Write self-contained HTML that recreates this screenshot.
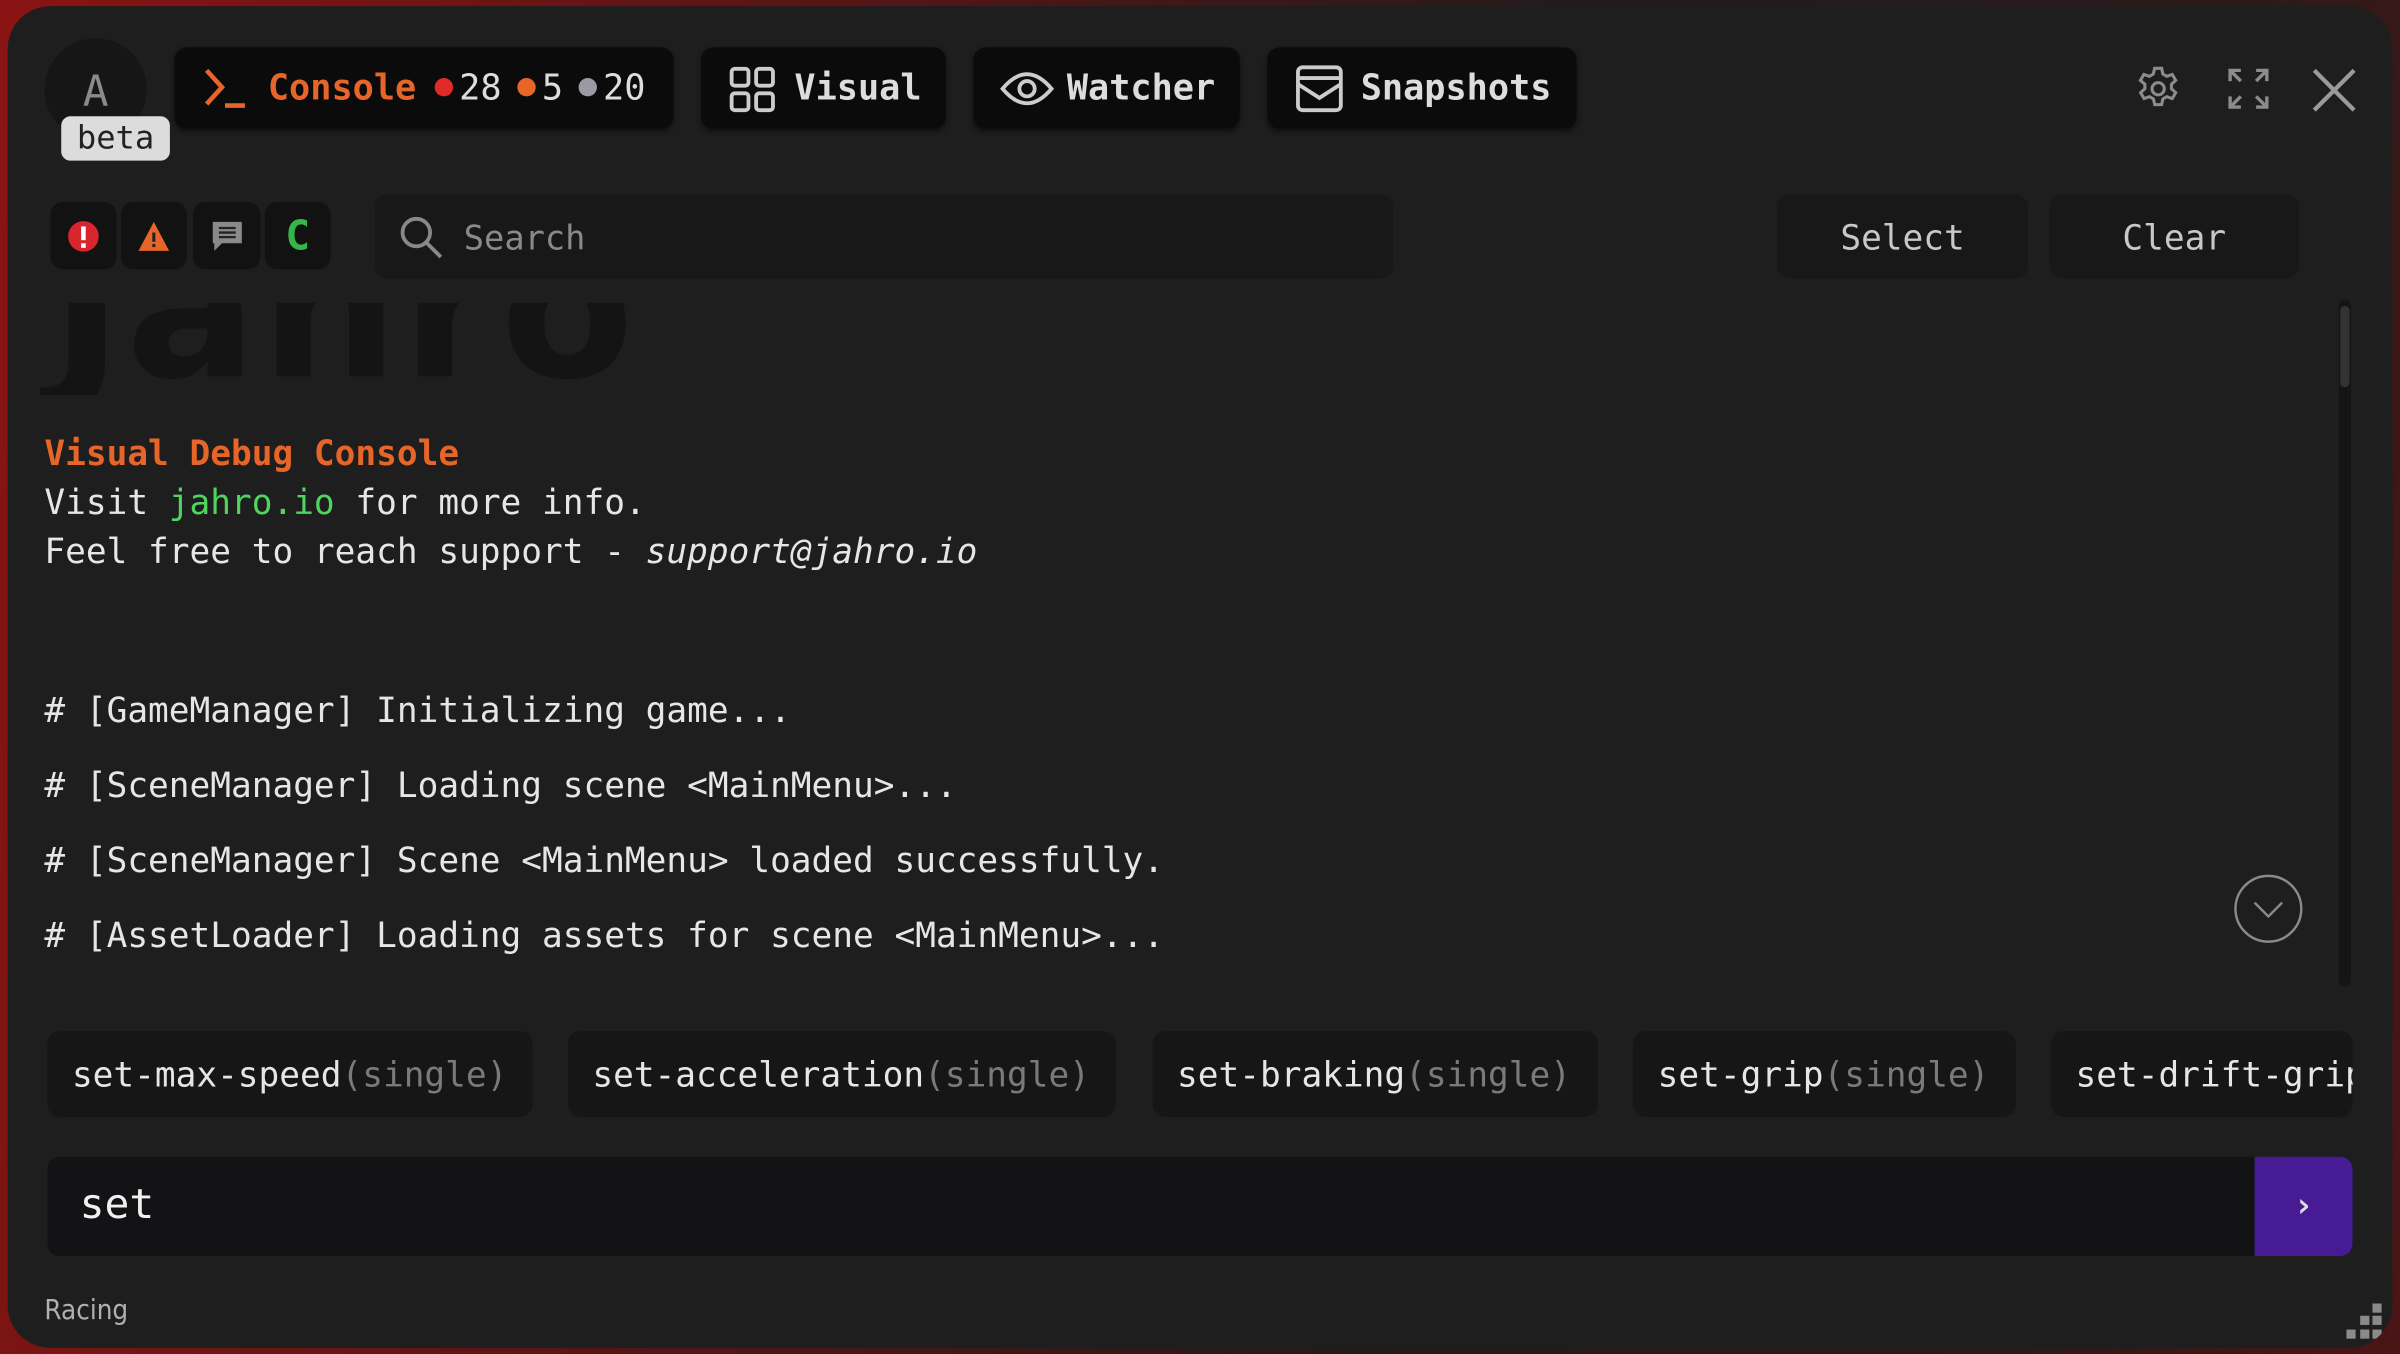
<!DOCTYPE html>
<html><head><meta charset="utf-8"><style>
*{margin:0;padding:0;box-sizing:border-box}
html,body{width:2400px;height:1354px;overflow:hidden;background:#1a1a1a}
#s{position:absolute;left:0;top:0;width:1568px;height:885px;transform:scale(1.53061,1.52994);transform-origin:0 0;font-family:"DejaVu Sans Mono","Liberation Mono",monospace;background:linear-gradient(100deg,#8a1414 0%,#5a1515 30%,#231a1a 60%,#2a1a1a 85%,#4a1515 100%)}
#w{position:absolute;left:5px;top:4px;width:1558px;height:877px;border-radius:28px;background:#1e1e1e;overflow:hidden}
.a{position:absolute}
.tab{position:absolute;top:27px;height:53px;background:#0b0b0b;border-radius:8px;color:#ddd;font-weight:bold;font-size:23px;display:flex;align-items:center;box-shadow:0 2px 3px #111}
.tab span{top:14px}
.btn{position:absolute;background:#161616;border-radius:8px}
.log{position:absolute;left:24px;color:#e6e6e6;font-size:22.5px;white-space:pre}
.chip{position:absolute;top:670px;height:56px;background:#161616;border-radius:8px;color:#e6e6e6;font-size:22.5px;padding-left:16px;padding-top:16px;white-space:pre;overflow:hidden}
.chip i{font-style:normal;color:#7a7a7a}
</style></head><body><div id="s"><div id="w">
<div class="a" style="left:24px;top:21px;width:67px;height:67px;border-radius:50%;background:#161616;color:#8a8a8a;font-size:28px;text-align:center;line-height:70px">A</div>
<div class="a" style="left:35px;top:72px;width:71px;height:29px;border-radius:6px;background:#dcdcdc;color:#222;font-size:21px;text-align:center;line-height:29px">beta</div>

<div class="tab" style="left:109px;width:326px">
<svg class="a" style="left:18px;top:12px" width="30" height="30" viewBox="0 0 30 30"><path d="M3 3 L13 14 L3 25" fill="none" stroke="#e8652a" stroke-width="3"/><path d="M15 26 H28" stroke="#e8652a" stroke-width="3"/></svg>
<span class="a" style="left:61px;color:#e8652a">Console</span>
<span class="a" style="left:170px;top:20px;width:12px;height:12px;border-radius:50%;background:#e02a2a"></span>
<span class="a" style="left:186px;font-weight:normal;color:#ddd">28</span>
<span class="a" style="left:224px;top:20px;width:12px;height:12px;border-radius:50%;background:#e8652a"></span>
<span class="a" style="left:240px;font-weight:normal">5</span>
<span class="a" style="left:264px;top:20px;width:12px;height:12px;border-radius:50%;background:#9a9aa5"></span>
<span class="a" style="left:280px;font-weight:normal">20</span>
</div>
<div class="tab" style="left:453px;width:160px">
<svg class="a" style="left:18px;top:12px" width="31" height="31" viewBox="0 0 31 31" fill="none" stroke="#ccc" stroke-width="2.5"><rect x="2" y="2" width="11" height="11" rx="2"/><rect x="18" y="2" width="11" height="11" rx="2"/><rect x="2" y="18" width="11" height="11" rx="2"/><rect x="18" y="18" width="11" height="11" rx="2"/></svg>
<span class="a" style="left:61px">Visual</span></div>
<div class="tab" style="left:631px;width:174px">
<svg class="a" style="left:17px;top:12px" width="36" height="30" viewBox="0 0 36 30" fill="none" stroke="#ccc" stroke-width="2.5"><path d="M2 15 Q18 -4 34 15 Q18 34 2 15Z"/><circle cx="18" cy="15" r="5"/></svg>
<span class="a" style="left:61px">Watcher</span></div>
<div class="tab" style="left:823px;width:202px">
<svg class="a" style="left:18px;top:11px" width="32" height="32" viewBox="0 0 32 32" fill="none" stroke="#ccc" stroke-width="2.5"><rect x="2" y="2" width="28" height="28" rx="3"/><path d="M2 9 H30 M2 13 L16 22 L30 13"/></svg>
<span class="a" style="left:61px">Snapshots</span></div>

<svg class="a" style="left:1389px;top:38px" width="32" height="32" viewBox="0 0 24 24" fill="none" stroke="#8c8c8c" stroke-width="1.5"><circle cx="12" cy="12" r="3"/><path d="M10.3 2h3.4l.6 2.8 1.9 1.1 2.7-.9 1.7 2.9-2.1 1.9v2.2l2.1 1.9-1.7 2.9-2.7-.9-1.9 1.1-.6 2.8h-3.4l-.6-2.8-1.9-1.1-2.7.9-1.7-2.9 2.1-1.9v-2.2L3.3 7.900 5 5l2.7.9 1.9-1.1z"/></svg>
<svg class="a" style="left:1450px;top:40px" width="28" height="28" viewBox="0 0 28 28" fill="none" stroke="#8c8c8c" stroke-width="2.2"><path d="M2 9V2h7M2 2l7 7M26 9V2h-7M26 2l-7 7M2 19v7h7M2 26l7-7M26 19v7h-7M26 26l-7-7"/></svg>
<svg class="a" style="left:1505px;top:40px" width="30" height="30" viewBox="0 0 30 30" stroke="#9a9a9a" stroke-width="2.8"><path d="M2 2L28 28M28 2L2 28"/></svg>

<div class="btn" style="left:28px;top:128px;width:43px;height:44px;background:#121212"><svg class="a" style="left:11px;top:12px" width="21" height="21"><circle cx="10.5" cy="10.5" r="10" fill="#d8262e"/><rect x="9" y="4" width="3" height="9" fill="#fff"/><rect x="9" y="15" width="3" height="3" fill="#fff"/></svg></div>
<div class="btn" style="left:74px;top:128px;width:43px;height:44px;background:#121212"><svg class="a" style="left:11px;top:12px" width="21" height="21"><path d="M10.5 1L20.5 20H0.5Z" fill="#e8652a"/><rect x="9.5" y="8" width="2" height="6" fill="#222"/><rect x="9.5" y="15.5" width="2" height="2" fill="#222"/></svg></div>
<div class="btn" style="left:121px;top:128px;width:44px;height:44px;background:#121212"><svg class="a" style="left:12px;top:12px" width="21" height="21"><path d="M1 1H20V15H7L2 20V15H1Z" fill="#8a8a8a"/><path d="M5 5H16M5 8H16M5 11H16" stroke="#222" stroke-width="1.5"/></svg></div>
<div class="btn" style="left:168px;top:128px;width:43px;height:44px;background:#121212;color:#36b54a;font-weight:bold;font-size:27px;text-align:center;line-height:46px">C</div>

<div class="btn" style="left:240px;top:123px;width:665px;height:55px;background:#181818"><svg class="a" style="left:15px;top:13px" width="30" height="30" fill="none" stroke="#888" stroke-width="2.5"><circle cx="12" cy="12" r="9"/><path d="M18.5 18.5L28 28"/></svg><span class="a" style="left:58px;top:17px;color:#8a8a8a;font-size:22px">Search</span></div>
<div class="btn" style="left:1156px;top:123px;width:164px;height:55px;background:#181818;color:#c8c8c8;font-size:22.5px;text-align:center;line-height:59px">Select</div>
<div class="btn" style="left:1334px;top:123px;width:163px;height:55px;background:#181818;color:#c8c8c8;font-size:22.5px;text-align:center;line-height:59px">Clear</div>

<div class="a" style="left:0;top:194px;width:1500px;height:60px;overflow:hidden"><div class="a" style="left:28px;top:-70px;font-family:'DejaVu Sans','Liberation Sans',sans-serif;font-weight:bold;font-size:127px;color:#141414;letter-spacing:2px">Jahro</div></div>

<div class="a" style="left:1523px;top:192px;width:8px;height:449px;border-radius:4px;background:#151515"></div>
<div class="a" style="left:1524px;top:196px;width:6px;height:53px;border-radius:3px;background:#333"></div>

<div class="log" style="top:280px;color:#e8652a;font-weight:bold">Visual Debug Console</div>
<div class="log" style="top:312px">Visit <span style="color:#4fd45f">jahro.io</span> for more info.</div>
<div class="log" style="top:344px">Feel free to reach support - <i>support@jahro.io</i></div>
<div class="log" style="top:448px"># [GameManager] Initializing game...</div>
<div class="log" style="top:497px"># [SceneManager] Loading scene &lt;MainMenu&gt;...</div>
<div class="log" style="top:546px"># [SceneManager] Scene &lt;MainMenu&gt; loaded successfully.</div>
<div class="log" style="top:595px"># [AssetLoader] Loading assets for scene &lt;MainMenu&gt;...</div>

<svg class="a" style="left:1454px;top:567px" width="46" height="46" fill="none" stroke="#8a8a8a" stroke-width="1.6"><circle cx="23" cy="23" r="21.5"/><path d="M14 19L23 28L32 19"/></svg>

<div class="chip" style="left:26px;width:317px">set-max-speed<i>(single)</i></div>
<div class="chip" style="left:366px;width:358px">set-acceleration<i>(single)</i></div>
<div class="chip" style="left:748px;width:291px">set-braking<i>(single)</i></div>
<div class="chip" style="left:1062px;width:250px">set-grip<i>(single)</i></div>
<div class="chip" style="left:1335px;width:197px">set-drift-grip<i>(single)</i></div>

<div class="a" style="left:26px;top:752px;width:1506px;height:65px;border-radius:8px;background:#131315;overflow:hidden">
<span class="a" style="left:21px;top:16px;color:#f0f0f0;font-size:27px">set</span>
<div class="a" style="right:0;top:0;width:64px;height:65px;background:#461b93;border-radius:0 8px 8px 0;color:#ddd;font-size:22px;text-align:center;line-height:65px;font-weight:bold">›</div>
</div>

<div class="a" style="left:24px;top:842px;color:#b0b0b0;font-size:18px;font-family:'DejaVu Sans Condensed','DejaVu Sans',sans-serif">Racing</div>
<svg class="a" style="left:1525px;top:846px" width="30" height="30" fill="#8a8a8a"><rect x="20" y="2" width="6" height="6"/><rect x="12" y="10" width="6" height="6"/><rect x="20" y="10" width="6" height="6"/><rect x="3" y="19" width="6" height="6"/><rect x="12" y="19" width="6" height="6"/><rect x="20" y="19" width="6" height="6"/></svg>
</div></div></body></html>
